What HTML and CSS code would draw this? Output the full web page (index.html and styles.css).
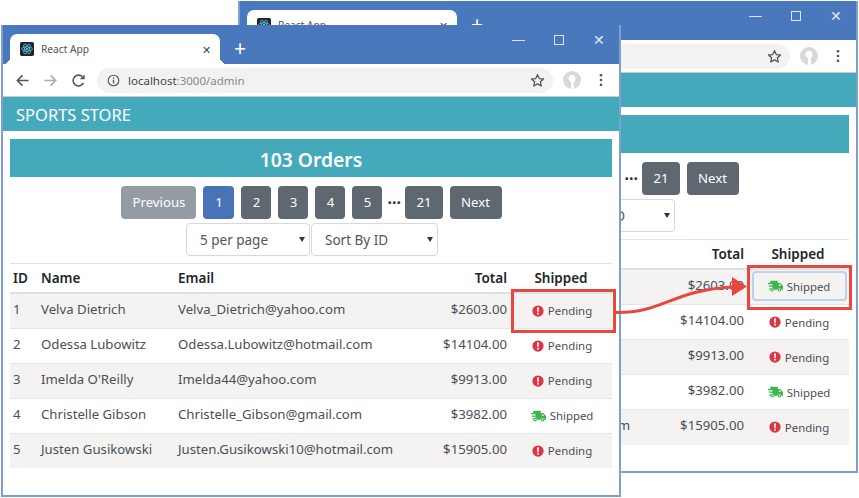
FILE: index.html
```html
<!DOCTYPE html>
<html lang="en">
<head>
	<meta charset="UTF-8">
	<title>React App</title>
	<link rel="stylesheet" href="styles.css">
</head>
<body>
<svg class="defs" width="0" height="0">
	<symbol id="i-react" viewBox="0 0 16 16">
		<rect width="16" height="16" rx="2" fill="#20232a"/>
		<g fill="none" stroke="#61dafb" stroke-width=".8">
			<ellipse cx="8" cy="8" rx="6.2" ry="2.5"/>
			<ellipse cx="8" cy="8" rx="6.2" ry="2.5" transform="rotate(60 8 8)"/>
			<ellipse cx="8" cy="8" rx="6.2" ry="2.5" transform="rotate(120 8 8)"/>
		</g>
		<circle cx="8" cy="8" r="1.2" fill="#61dafb"/>
	</symbol>
	<symbol id="i-back" viewBox="0 0 16 16">
		<path d="M14.500 8H2.500M8 2.500 2.500 8 8 13.500" fill="none" stroke="currentColor" stroke-width="1.700"/>
	</symbol>
	<symbol id="i-forward" viewBox="0 0 16 16">
		<path d="M1.500 8h12M8 2.500 13.500 8 8 13.500" fill="none" stroke="currentColor" stroke-width="1.700"/>
	</symbol>
	<symbol id="i-reload" viewBox="0 0 16 16">
		<path d="M13.300 10.500A5.800 5.800 0 1 1 12.200 4" fill="none" stroke="currentColor" stroke-width="1.700"/>
		<path d="M14.500 1.500v5.200H9.300z" fill="currentColor"/>
	</symbol>
	<symbol id="i-info" viewBox="0 0 16 16">
		<circle cx="8" cy="8" r="6.500" fill="none" stroke="currentColor" stroke-width="1.400"/>
		<path d="M7.200 7h1.600v4.800H7.200zM7.200 4.200h1.600v1.600H7.200z" fill="currentColor"/>
	</symbol>
	<symbol id="i-star" viewBox="0 0 16 16">
		<path d="M8 1.800l1.900 4.100 4.500.5-3.300 3 .9 4.500L8 11.600l-4 2.300.9-4.500-3.300-3 4.500-.5z" fill="none" stroke="currentColor" stroke-width="1.400" stroke-linejoin="round"/>
	</symbol>
	<symbol id="i-avatar" viewBox="0 0 18 18">
		<circle cx="9" cy="9" r="9" fill="#d8d8d8"/>
		<path d="M9 3.800c2.200 0 3.500 1.800 3.500 4 0 1.800-.8 3-1.700 3.700l.3 6.200H7.900l.3-6.200C7.300 10.800 5.500 9.600 5.500 7.800c0-2.200 1.300-4 3.500-4z" fill="#fff"/>
	</symbol>
	<symbol id="i-dots" viewBox="0 0 4 16">
		<circle cx="2" cy="2.500" r="1.500" fill="currentColor"/>
		<circle cx="2" cy="8" r="1.500" fill="currentColor"/>
		<circle cx="2" cy="13.500" r="1.500" fill="currentColor"/>
	</symbol>
	<symbol id="i-pending" viewBox="0 0 16 16">
		<circle cx="8" cy="8" r="7.500" fill="#dc3545"/>
		<path d="M6.700 3.300h2.600l-.4 6H7.100zM6.900 10.300h2.200v2.200H6.900z" fill="#fff"/>
	</symbol>
	<symbol id="i-truck" viewBox="0 0 20 16">
		<path d="M3 1h10v3h3.200L20 8v5h-2a2.700 2.700 0 0 0-5.400 0H8a2.700 2.700 0 0 0-5.400 0H2v-2.500h4V9H1V7.300h5V5.800H0V4h3z" fill="#3cb54a"/>
		<path d="M14.500 5.500h1.200l2 2.300h-3.200z" fill="#fff"/>
		<circle cx="5.300" cy="13" r="2.400" fill="#3cb54a"/>
		<circle cx="15.300" cy="13" r="2.400" fill="#3cb54a"/>
		<circle cx="5.300" cy="13" r=".9" fill="#fff"/>
		<circle cx="15.300" cy="13" r=".9" fill="#fff"/>
	</symbol>
</svg>

<div class="desktop">

	<!-- window at the back -->
	<div class="window window-back">
		<div class="titlebar">
			<div class="tab">
				<svg class="favicon"><use href="#i-react"/></svg>
				<span class="tab-title">React App</span>
				<span class="tab-close">&#x2715;</span>
			</div>
			<span class="tab-new">+</span>
			<div class="caption">
				<span class="cap-min"></span>
				<span class="cap-max"></span>
				<span class="cap-close">&#x2715;</span>
			</div>
		</div>
		<div class="toolbar">
			<svg class="tool"><use href="#i-back"/></svg>
			<svg class="tool tool-off"><use href="#i-forward"/></svg>
			<svg class="tool"><use href="#i-reload"/></svg>
			<div class="omnibox">
				<svg class="omni-info"><use href="#i-info"/></svg>
				<span class="host">localhost</span><span class="path">:3000/admin</span>
				<svg class="omni-star"><use href="#i-star"/></svg>
			</div>
			<svg class="avatar"><use href="#i-avatar"/></svg>
			<svg class="dots"><use href="#i-dots"/></svg>
		</div>
		<div class="navbar">SPORTS STORE</div>
		<div class="content">
			<h1 class="orders">103 Orders</h1>
			<div class="pager">
				<a class="btn btn-muted">Previous</a>
				<a class="btn btn-active">1</a>
				<a class="btn">2</a>
				<a class="btn">3</a>
				<a class="btn">4</a>
				<a class="btn">5</a>
				<span class="more">...</span>
				<a class="btn">21</a>
				<a class="btn btn-next">Next</a>
			</div>
			<div class="filters">
				<div class="select select-page">5 per page</div>
				<div class="select select-sort">Sort By ID</div>
			</div>
			<table>
				<colgroup><col class="c-id"><col class="c-name"><col class="c-email"><col class="c-total"><col class="c-ship"></colgroup>
				<thead>
					<tr><th>ID</th><th>Name</th><th>Email</th><th class="num">Total</th><th class="status">Shipped</th></tr>
				</thead>
				<tbody>
					<tr><td>1</td><td>Velva Dietrich</td><td>Velva_Dietrich@yahoo.com</td><td class="num">$2603.00</td><td class="status"><span class="state state-focus"><svg class="truck"><use href="#i-truck"/></svg>Shipped</span></td></tr>
					<tr><td>2</td><td>Odessa Lubowitz</td><td>Odessa.Lubowitz@hotmail.com</td><td class="num">$14104.00</td><td class="status"><span class="state"><svg class="alert"><use href="#i-pending"/></svg>Pending</span></td></tr>
					<tr><td>3</td><td>Imelda O'Reilly</td><td>Imelda44@yahoo.com</td><td class="num">$9913.00</td><td class="status"><span class="state"><svg class="alert"><use href="#i-pending"/></svg>Pending</span></td></tr>
					<tr><td>4</td><td>Christelle Gibson</td><td>Christelle_Gibson@gmail.com</td><td class="num">$3982.00</td><td class="status"><span class="state"><svg class="truck"><use href="#i-truck"/></svg>Shipped</span></td></tr>
					<tr><td>5</td><td>Justen Gusikowski</td><td>Justen.Gusikowski10@hotmail.com</td><td class="num">$15905.00</td><td class="status"><span class="state"><svg class="alert"><use href="#i-pending"/></svg>Pending</span></td></tr>
				</tbody>
			</table>
		</div>
	</div>

	<!-- window in front -->
	<div class="window window-front">
		<div class="titlebar">
			<div class="tab">
				<svg class="favicon"><use href="#i-react"/></svg>
				<span class="tab-title">React App</span>
				<span class="tab-close">&#x2715;</span>
			</div>
			<span class="tab-new">+</span>
			<div class="caption">
				<span class="cap-min"></span>
				<span class="cap-max"></span>
				<span class="cap-close">&#x2715;</span>
			</div>
		</div>
		<div class="toolbar">
			<svg class="tool"><use href="#i-back"/></svg>
			<svg class="tool tool-off"><use href="#i-forward"/></svg>
			<svg class="tool"><use href="#i-reload"/></svg>
			<div class="omnibox">
				<svg class="omni-info"><use href="#i-info"/></svg>
				<span class="host">localhost</span><span class="path">:3000/admin</span>
				<svg class="omni-star"><use href="#i-star"/></svg>
			</div>
			<svg class="avatar"><use href="#i-avatar"/></svg>
			<svg class="dots"><use href="#i-dots"/></svg>
		</div>
		<div class="navbar">SPORTS STORE</div>
		<div class="content">
			<h1 class="orders">103 Orders</h1>
			<div class="pager">
				<a class="btn btn-muted">Previous</a>
				<a class="btn btn-active">1</a>
				<a class="btn">2</a>
				<a class="btn">3</a>
				<a class="btn">4</a>
				<a class="btn">5</a>
				<span class="more">...</span>
				<a class="btn">21</a>
				<a class="btn btn-next">Next</a>
			</div>
			<div class="filters">
				<div class="select select-page">5 per page</div>
				<div class="select select-sort">Sort By ID</div>
			</div>
			<table>
				<colgroup><col class="c-id"><col class="c-name"><col class="c-email"><col class="c-total"><col class="c-ship"></colgroup>
				<thead>
					<tr><th>ID</th><th>Name</th><th>Email</th><th class="num">Total</th><th class="status">Shipped</th></tr>
				</thead>
				<tbody>
					<tr><td>1</td><td>Velva Dietrich</td><td>Velva_Dietrich@yahoo.com</td><td class="num">$2603.00</td><td class="status"><span class="state"><svg class="alert"><use href="#i-pending"/></svg>Pending</span></td></tr>
					<tr><td>2</td><td>Odessa Lubowitz</td><td>Odessa.Lubowitz@hotmail.com</td><td class="num">$14104.00</td><td class="status"><span class="state"><svg class="alert"><use href="#i-pending"/></svg>Pending</span></td></tr>
					<tr><td>3</td><td>Imelda O'Reilly</td><td>Imelda44@yahoo.com</td><td class="num">$9913.00</td><td class="status"><span class="state"><svg class="alert"><use href="#i-pending"/></svg>Pending</span></td></tr>
					<tr><td>4</td><td>Christelle Gibson</td><td>Christelle_Gibson@gmail.com</td><td class="num">$3982.00</td><td class="status"><span class="state"><svg class="truck"><use href="#i-truck"/></svg>Shipped</span></td></tr>
					<tr><td>5</td><td>Justen Gusikowski</td><td>Justen.Gusikowski10@hotmail.com</td><td class="num">$15905.00</td><td class="status"><span class="state"><svg class="alert"><use href="#i-pending"/></svg>Pending</span></td></tr>
				</tbody>
			</table>
		</div>
	</div>

	<!-- red callout boxes and the arrow between them -->
	<div class="callout callout-from"></div>
	<div class="callout callout-to"></div>
	<svg class="arrow" width="859" height="498" viewBox="0 0 859 498">
		<path d="M616 312.500C664 313 672 290 733 287" fill="none" stroke="#e8473f" stroke-width="3"/>
		<path d="M732 277l15 9.500-15 9.500z" fill="#e8473f"/>
	</svg>

</div>
</body>
</html>
```

FILE: styles.css
```css
html, body {
	margin: 0;
	padding: 0;
	background: #fff;
	overflow: hidden;
}
.defs {
	position: absolute;
}
.desktop {
	position: relative;
	width: 859px;
	height: 498px;
	font-family: "Noto Sans", "Open Sans", sans-serif;
	color: #4a4f54;
	overflow: hidden;
}

/* windows */
.window {
	position: absolute;
	box-sizing: border-box;
	width: 620px;
	height: 472px;
	border: 2px solid #7f9fd0;
	border-top: 0;
	background: #fff;
	overflow: hidden;
}
.window-back {
	left: 238px;
	top: 1px;
}
.window-front {
	left: 1px;
	top: 25px;
}

.titlebar {
	display: flex;
	align-items: flex-end;
	height: 39px;
	padding-left: 7px;
	background: #4a78bd;
}
.tab {
	position: relative;
	display: flex;
	align-items: center;
	box-sizing: border-box;
	width: 210px;
	height: 30px;
	padding: 0 9px 0 10px;
	background: #fff;
	border-radius: 7px 7px 0 0;
}
.tab::before, .tab::after {
	content: "";
	position: absolute;
	bottom: 0;
	width: 7px;
	height: 7px;
}
.tab::before {
	left: -7px;
	background: radial-gradient(circle at 0 0, transparent 7px, #fff 7px);
}
.tab::after {
	right: -7px;
	background: radial-gradient(circle at 100% 0, transparent 7px, #fff 7px);
}
.favicon {
	width: 14px;
	height: 14px;
	flex: none;
}
.tab-title {
	flex: 1;
	margin-left: 7px;
	font-size: 10.200px;
	color: #555;
}
.tab-close {
	font-size: 11px;
	color: #444;
}
.tab-new {
	width: 40px;
	height: 30px;
	line-height: 28px;
	text-align: center;
	font-size: 21px;
	color: #fff;
}
.caption {
	display: flex;
	align-items: center;
	gap: 29px;
	align-self: flex-start;
	margin-left: auto;
	height: 30px;
	padding-right: 14px;
}
.cap-min {
	width: 13px;
	height: 1px;
	background: #dbe5f3;
}
.cap-max {
	box-sizing: border-box;
	width: 10px;
	height: 10px;
	border: 1px solid #dbe5f3;
}
.cap-close {
	font-size: 14px;
	line-height: 14px;
	color: #e3ebf6;
}

.toolbar {
	display: flex;
	align-items: center;
	box-sizing: border-box;
	height: 33px;
	padding-left: 12px;
	background: #fff;
	border-bottom: 1px solid #c9ccd0;
}
.tool {
	width: 15px;
	height: 15px;
	margin-right: 13px;
	color: #555;
	flex: none;
}
.tool-off {
	color: #a9abae;
}
.omnibox {
	display: flex;
	align-items: center;
	box-sizing: border-box;
	width: 456px;
	height: 25px;
	margin-left: -2px;
	padding: 0 10px;
	background: #f3f2f2;
	border-radius: 13px;
	font-size: 11.500px;
}
.omni-info {
	width: 13px;
	height: 13px;
	margin-right: 8px;
	color: #555;
}
.host {
	color: #444;
}
.path {
	color: #888;
}
.omni-star {
	width: 15px;
	height: 15px;
	margin-left: auto;
	margin-right: -2px;
	color: #555;
}
.avatar {
	width: 18px;
	height: 18px;
	margin-left: 10px;
}
.dots {
	width: 4px;
	height: 14px;
	margin-left: 18px;
	color: #555;
}

.navbar {
	box-sizing: border-box;
	height: 34px;
	padding-left: 13px;
	background: #45a9bc;
	color: #fff;
	font-size: 16.500px;
	line-height: 36px;
}

/* page */
.content {
	padding: 8px 7px 0;
}
.orders {
	margin: 0;
	height: 38px;
	background: #45a9bc;
	color: #fff;
	font-size: 19.300px;
	font-weight: 600;
	line-height: 41px;
	text-align: center;
}
.pager {
	display: flex;
	justify-content: center;
	gap: 7px;
	height: 33px;
	margin-top: 9px;
	padding-left: 1px;
}
.btn {
	box-sizing: border-box;
	min-width: 30px;
	height: 33px;
	padding: 0 11px;
	background: #5f6770;
	border-radius: 4px;
	color: #fff;
	font-size: 13.200px;
	line-height: 33px;
	text-align: center;
}
.btn-muted {
	min-width: 75px;
	background: #949ba3;
}
.btn-active {
	min-width: 31px;
	background: #4a72b8;
}
.btn-next {
	min-width: 52px;
}
.more {
	width: 13px;
	margin: 0 -2px;
	color: #333;
	font-size: 16px;
	font-weight: 700;
	line-height: 24px;
	text-align: center;
}
.filters {
	display: flex;
	justify-content: center;
	gap: 1px;
	margin-top: 4px;
	padding-left: 2px;
}
.select {
	position: relative;
	box-sizing: border-box;
	height: 33px;
	padding-left: 13px;
	border: 1px solid #d5d8dc;
	border-radius: 4px;
	font-size: 13.500px;
	line-height: 33px;
	color: #555;
}
.select::after {
	content: "";
	position: absolute;
	top: 13px;
	right: 4px;
	border: 3.500px solid transparent;
	border-top: 5px solid #333;
}
.select-page {
	width: 124px;
}
.select-sort {
	width: 127px;
}

/* table */
table {
	width: 602px;
	margin-top: 7px;
	border-collapse: collapse;
	border-top: 1px solid #e7dfe0;
	table-layout: fixed;
	font-size: 13.200px;
}
.c-id { width: 28px; }
.c-name { width: 137px; }
.c-email { width: 265px; }
.c-total { width: 70px; }
.c-ship { width: 102px; }
th {
	height: 28px;
	padding: 0 3px;
	text-align: left;
	font-size: 13.500px;
	font-weight: 600;
	color: #22262a;
	border-bottom: 2px solid #dee2e6;
}
td {
	box-sizing: border-box;
	height: 35px;
	padding: 0 3px 4px;
	border-top: 1px solid #e4e5e7;
	white-space: nowrap;
}
tbody tr:nth-child(odd) {
	background: #f5f3f2;
}
.num {
	text-align: right;
}
.status {
	text-align: center;
}
.state {
	display: inline-flex;
	align-items: center;
	justify-content: center;
	gap: 4px;
	font-size: 11.400px;
	position: relative;
	left: 1px;
	top: 3px;
}
.state-focus {
	box-sizing: border-box;
	width: 95px;
	height: 30px;
	top: 1px;
	border: 2px solid #b9d3ec;
	border-radius: 4px;
}
.alert {
	width: 12px;
	height: 12px;
}
.truck {
	width: 15px;
	height: 12px;
}

/* annotation */
.callout {
	position: absolute;
	box-sizing: border-box;
	width: 105px;
	border: 3px solid #e8473f;
}
.callout-from {
	left: 511px;
	top: 289px;
	height: 44px;
}
.callout-to {
	left: 747px;
	top: 265px;
	height: 45px;
}
.arrow {
	position: absolute;
	left: 0;
	top: 0;
}
```
